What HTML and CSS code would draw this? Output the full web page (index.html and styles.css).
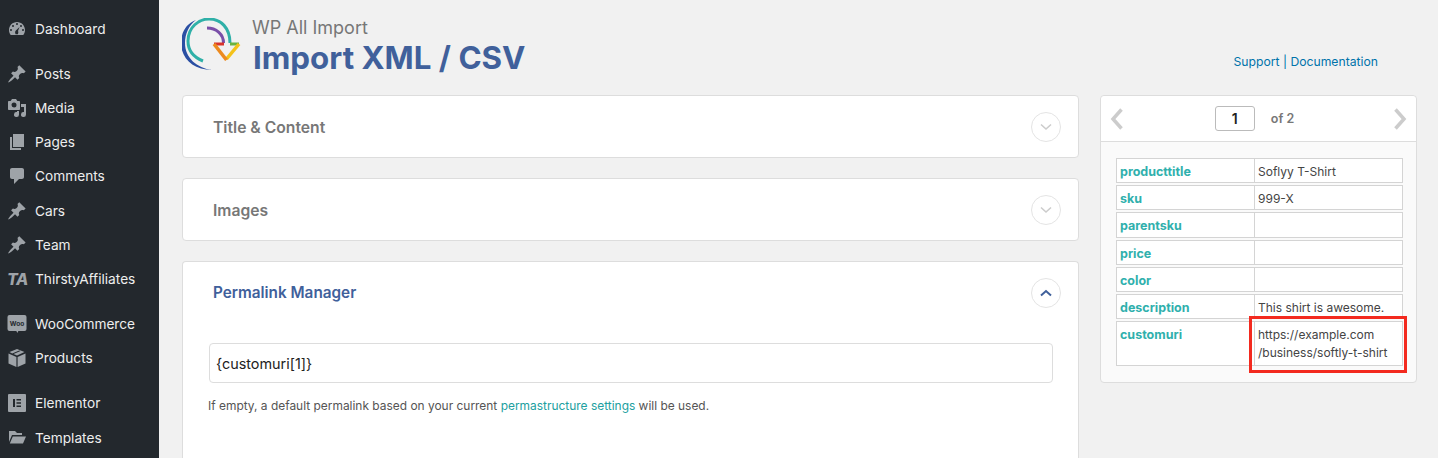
FILE: index.html
```html
<!DOCTYPE html>
<html lang="en">
<head>
    <meta charset="UTF-8">
    <title>Import XML / CSV</title>
    <link rel="stylesheet" href="styles.css">
</head>
<body>
    <div class="wrap">
        <nav class="sidebar">
            <a class="menu-item first"><svg class="icon" viewBox="0 0 20 20"><path fill-rule="evenodd" d="M3.760 16h12.480C17.340 14.630 18 12.890 18 11c0-4.420-3.580-8-8-8s-8 3.580-8 8c0 1.890.66 3.630 1.760 5zM10 4a1 1 0 1 1 0 2 1 1 0 0 1 0-2zM6 6a1 1 0 1 1 0 2 1 1 0 0 1 0-2zm8 0a1 1 0 1 1 0 2 1 1 0 0 1 0-2zM4 10a1 1 0 1 1 0 2 1 1 0 0 1 0-2zm12 0a1 1 0 1 1 0 2 1 1 0 0 1 0-2zM8.600 15.300s-.5-1.200-.5-2c0-.6.2-1.100.5-1.500L12.500 8l-1.500 4c.2.400.3.800.3 1.300 0 .9-.4 2-.4 2z"/></svg>Dashboard</a>

            <a class="menu-item group"><svg class="icon" viewBox="0 0 20 20"><use href="#pin"/></svg>Posts</a>
            <a class="menu-item"><svg class="icon" viewBox="0 0 20 20"><path fill-rule="evenodd" d="M13 11V4c0-.55-.45-1-1-1h-1.670L9 1H5L3.670 3H2c-.55 0-1 .45-1 1v7c0 .55.45 1 1 1h10c.55 0 1-.45 1-1zM7 4.500a2.500 2.500 0 1 1 0 5 2.500 2.500 0 0 1 0-5zM14 6h5v10.500a2.500 2.500 0 1 1-2-2.450V9h-3zm-4 8.050V13h2v3.500a2.500 2.500 0 1 1-2-2.450z"/></svg>Media</a>
            <a class="menu-item"><svg class="icon" viewBox="0 0 20 20"><path d="M6 15V2h11v13zm-1 1h9v2H3V5h2z"/></svg>Pages</a>
            <a class="menu-item"><svg class="icon" viewBox="0 0 20 20"><path d="M5 2h10c1.100 0 2 .9 2 2v7c0 1.100-.9 2-2 2h-3l-5 5v-5H5c-1.100 0-2-.9-2-2V4c0-1.100.9-2 2-2z"/></svg>Comments</a>
            <a class="menu-item"><svg class="icon" viewBox="0 0 20 20"><use href="#pin"/></svg>Cars</a>
            <a class="menu-item"><svg class="icon" viewBox="0 0 20 20"><use href="#pin"/></svg>Team</a>
            <a class="menu-item"><span class="ta-icon">TA</span>ThirstyAffiliates</a>

            <a class="menu-item group"><svg class="icon" viewBox="0 0 20 20"><rect x="0.500" y="1" width="19" height="16" rx="2"/><path d="M9 16.500h2.500l-1 2.500z"/><text x="10" y="11.500" class="woo-text" text-anchor="middle">Woo</text></svg>WooCommerce</a>
            <a class="menu-item"><svg class="icon" viewBox="0 0 20 20"><path d="M10 1l7.500 3L10 7.500 6.500 6l7-3-1.300-.6-7 3L2.500 4zM1.500 5.500 9.400 9v10l-7.900-3.500zM18.500 5.500v10L10.600 19V9z"/></svg>Products</a>

            <a class="menu-item group"><svg class="icon" viewBox="0 0 20 20"><path fill-rule="evenodd" d="M2 1h16a1 1 0 0 1 1 1v16a1 1 0 0 1-1 1H2a1 1 0 0 1-1-1V2a1 1 0 0 1 1-1zM6 6v8h2V6zm3.500 0v1.600H14V6zm0 3.200v1.600H14V9.200zm0 3.200V14H14v-1.600z"/></svg>Elementor</a>
            <a class="menu-item"><svg class="icon" viewBox="0 0 20 20"><path d="M2 3h6l2 2h5v2H5l-3 7zM5.800 8.500H19l-3 7H2.800z"/></svg>Templates</a>

            <svg class="defs" width="0" height="0"><defs><path id="pin" d="M10.440 3.020l1.820-1.820 6.360 6.350-1.830 1.820c-1.050-.68-2.480-.57-3.410.36l-.75.75c-.92.93-1.040 2.350-.35 3.410l-1.830 1.820-2.410-2.410-2.800 2.790c-.42.42-3.380 2.710-3.800 2.290s1.860-3.390 2.280-3.810l2.790-2.790L4.100 9.360l1.830-1.820c1.050.69 2.480.57 3.410-.36l.75-.75c.93-.92 1.040-2.350.35-3.410z"/></defs></svg>
        </nav>

        <main class="content">
            <header class="page-head">
                <svg class="logo" viewBox="7 8 60 56">
                    <path d="M21 10C10 14 6 24 6 33c0 15 12 27 31 27C22 58 10 48 10 33c0-9 4-18 11-23z" fill="#2b4fa3"/>
                    <path d="M28 51C18 47 13 40 13 31 13 17 24 9 34 9c12 0 21 9 21 24" fill="none" stroke="#2fb0a8" stroke-width="3"/>
                    <path d="M32 18c9 0 16.500 6 16.500 15" fill="none" stroke="#7a4fa8" stroke-width="3"/>
                    <path d="M39 34h10" stroke="#d9342b" stroke-width="3"/>
                    <path d="M55 34h9" stroke="#6cb33f" stroke-width="3"/>
                    <path d="M64 34 51.500 49" fill="none" stroke="#f4c21a" stroke-width="3.500"/>
                    <path d="M39 34l12.500 16" fill="none" stroke="#ec8a1e" stroke-width="3.500"/>
                </svg>
                <div class="titles">
                    <div class="subtitle">WP All Import</div>
                    <h1>Import XML / CSV</h1>
                </div>
                <div class="head-links"><a>Support</a> | <a>Documentation</a></div>
            </header>

            <div class="columns">
                <div class="sections">
                    <section class="card">
                        <div class="card-head">
                            <h2>Title &amp; Content</h2>
                            <span class="toggle"><svg viewBox="0 0 14 8"><path d="M2 1.500 7 6l5-4.500"/></svg></span>
                        </div>
                    </section>
                    <section class="card">
                        <div class="card-head">
                            <h2>Images</h2>
                            <span class="toggle"><svg viewBox="0 0 14 8"><path d="M2 1.500 7 6l5-4.500"/></svg></span>
                        </div>
                    </section>
                    <section class="card open">
                        <div class="card-head">
                            <h2>Permalink Manager</h2>
                            <span class="toggle"><svg viewBox="0 0 14 8"><path d="M2 6.500 7 2l5 4.500"/></svg></span>
                        </div>
                        <div class="card-body">
                            <input class="field" type="text" value="{customuri[1]}">
                            <p class="hint">If empty, a default permalink based on your current <a>permastructure settings</a> will be used.</p>
                        </div>
                    </section>
                </div>

                <aside class="preview">
                    <div class="pager">
                        <svg class="arrow" viewBox="0 0 14 24"><path d="M11.500 2.500 3 12l8.500 9.500"/></svg>
                        <div class="page-num">
                            <span class="page-box">1</span>
                            <span class="page-of">of 2</span>
                        </div>
                        <svg class="arrow" viewBox="0 0 14 24"><path d="M2.500 2.500 11 12l-8.500 9.500"/></svg>
                    </div>
                    <div class="preview-body">
                        <table class="data">
                            <tr><th>producttitle</th><td>Soflyy T-Shirt</td></tr>
                            <tr><th>sku</th><td>999-X</td></tr>
                            <tr><th>parentsku</th><td></td></tr>
                            <tr><th>price</th><td></td></tr>
                            <tr><th>color</th><td></td></tr>
                            <tr><th>description</th><td>This shirt is awesome.</td></tr>
                            <tr><th>customuri</th><td class="marked">https://example.com<br>/business/softly-t-shirt<span class="highlight"></span></td></tr>
                        </table>
                    </div>
                </aside>
            </div>
        </main>
    </div>
</body>
</html>
```

FILE: styles.css
```css
html, body {
    margin: 0;
    height: 458px;
    overflow: hidden;
}

body {
    font-family: Inter, "Liberation Sans", sans-serif;
    font-size: 13px;
    color: #444;
    background-color: #f1f1f1;
}

.wrap {
    display: flex;
    height: 458px;
}

/* admin menu */
.sidebar {
    width: 159px;
    flex-shrink: 0;
    background-color: #23282d;
    padding-top: 11.5px;
    box-sizing: border-box;
}

.menu-item {
    display: flex;
    align-items: center;
    height: 34.2px;
    color: #eee;
    font-size: 13.7px;
}

.menu-item.group {
    margin-top: 11px;
}

.menu-item .icon {
    width: 20px;
    height: 20px;
    margin: 0 8px 0 7px;
    fill: #9ea3a8;
    flex-shrink: 0;
}

.ta-icon {
    width: 21px;
    margin: 0 7px 0 7px;
    color: #9ea3a8;
    font-weight: 800;
    font-style: italic;
    font-size: 16px;
    letter-spacing: -0.5px;
}

.woo-text {
    font-size: 6.5px;
    font-weight: 700;
    fill: #23282d;
}

.defs {
    position: absolute;
}

/* page */
.content {
    flex: 1;
    padding: 0 21px 0 23px;
    min-width: 0;
}

.page-head {
    display: flex;
    align-items: flex-start;
    height: 95px;
    box-sizing: border-box;
    padding-top: 18px;
}

.logo {
    width: 60px;
    height: 56px;
    margin-right: 10px;
    flex-shrink: 0;
}

.titles {
    flex: 1;
}

.subtitle {
    font-size: 18px;
    line-height: 20px;
    color: #777;
}

h1 {
    margin: 2px 0 0 1px;
    font-size: 31.3px;
    line-height: 36px;
    font-weight: 700;
    color: #40609b;
}

.head-links {
    margin: 36px 39px 0 0;
    font-size: 12.2px;
    color: #0073aa;
}

.columns {
    display: flex;
    gap: 21px;
    align-items: flex-start;
}

.sections {
    flex: 1;
    min-width: 0;
}

.card {
    background-color: #fff;
    border: 1px solid #ddd;
    border-radius: 4px;
    margin-bottom: 20px;
}

/* the open card runs on below the window */
.card.open {
    margin-bottom: 0;
    border-bottom: none;
    border-radius: 4px 4px 0 0;
}

.card-head {
    display: flex;
    align-items: center;
    justify-content: space-between;
    height: 61px;
    padding: 0 17px 0 30px;
}

h2 {
    margin: 2px 0 0;
    font-size: 15.7px;
    font-weight: 600;
    color: #777;
}

.open h2 {
    margin: 0;
    font-size: 15.3px;
    color: #40609b;
}

.toggle {
    display: flex;
    align-items: center;
    justify-content: center;
    width: 28px;
    height: 28px;
    border: 1px solid #e4e4e4;
    border-radius: 50%;
}

.toggle svg {
    width: 14px;
    height: 8px;
    fill: none;
    stroke: #ccc;
    stroke-width: 1.6;
}

.open .toggle svg {
    stroke: #40609b;
    stroke-width: 2;
}

.card-body {
    padding: 20px 25px 44px 26px;
}

.field {
    display: block;
    box-sizing: border-box;
    width: 100%;
    height: 40px;
    padding: 0 6px;
    font-family: inherit;
    font-size: 14.4px;
    color: #222;
    border: 1px solid #ddd;
    border-radius: 4px;
    background-color: #fff;
}

.hint {
    margin: 15px 0 0 -1px;
    font-size: 11.95px;
    line-height: 16px;
    color: #555;
}

.hint a {
    color: #21a0a0;
}

/* record preview */
.preview {
    width: 317px;
    flex-shrink: 0;
    box-sizing: border-box;
    background-color: #fafafa;
    border: 1px solid #ddd;
    border-radius: 4px;
}

.pager {
    display: flex;
    align-items: center;
    justify-content: space-between;
    height: 45px;
    padding: 0 9px;
    background-color: #fff;
    border-bottom: 1px solid #ddd;
    border-radius: 4px 4px 0 0;
}

.arrow {
    width: 14px;
    height: 24px;
    fill: none;
    stroke: #ccc;
    stroke-width: 3.5;
}

.page-num {
    display: flex;
    align-items: center;
    gap: 16px;
    margin: -1px 0 0 -8px;
}

.page-box {
    box-sizing: border-box;
    width: 40px;
    height: 25px;
    line-height: 23px;
    text-align: center;
    font-weight: 600;
    font-size: 14px;
    color: #222;
    background-color: #fff;
    border: 1px solid #bbb;
    border-radius: 3px;
}

.page-of {
    font-size: 12.5px;
    font-weight: 600;
    color: #777;
}

.preview-body {
    padding: 16px 13px 16px 15px;
}

.data {
    width: 100%;
    border-collapse: separate;
    border-spacing: 0 2px;
    table-layout: fixed;
    margin: -2px 0;
}

.data th,
.data td {
    height: 25.2px;
    box-sizing: border-box;
    padding: 4px 3px 1px;
    border: 1px solid #d4d4d4;
    background-color: #fff;
    font-size: 12.5px;
    line-height: 18.2px;
    text-align: left;
    vertical-align: top;
}

.data th {
    width: 139px;
    font-weight: 700;
    color: #30b0ad;
}

.data td {
    font-size: 12px;
    font-weight: 400;
    color: #444;
    border-left: none;
}

.data tr:last-child td,
.data tr:last-child th {
    padding-bottom: 2px;
}

.marked {
    position: relative;
}

.highlight {
    position: absolute;
    left: -6px;
    right: -5px;
    top: -6px;
    bottom: -8px;
    border: 3px solid #f32a1f;
}
```
